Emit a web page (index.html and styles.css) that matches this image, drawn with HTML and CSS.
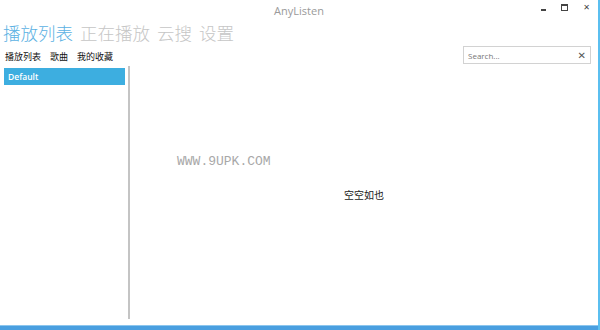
FILE: index.html
```html
<!DOCTYPE html>
<html lang="zh">
<head>
    <meta charset="UTF-8">
    <title>AnyListen</title>
    <link rel="stylesheet" href="styles.css">
</head>
<body>

<div class="window">
    <div class="titlebar">
        <span class="appTitle">AnyListen</span>
        <div class="controls">
            <span class="ctlMin"></span>
            <span class="ctlMax"></span>
            <span class="ctlClose">&#x2715;</span>
        </div>
    </div>

    <div class="tabs">
        <span class="tab active">播放列表</span>
        <span class="tab">正在播放</span>
        <span class="tab">云搜</span>
        <span class="tab">设置</span>
    </div>

    <div class="toolbar">
        <div class="subTabs">
            <span>播放列表</span>
            <span>歌曲</span>
            <span>我的收藏</span>
        </div>
        <div class="searchBox">
            <span class="searchText">Search...</span>
            <span class="searchClear">&#x2715;</span>
        </div>
    </div>

    <div class="main">
        <div class="sidebar">
            <div class="listItem selected">Default</div>
        </div>
        <div class="divider"></div>
        <div class="content">
            <p class="empty">空空如也</p>
            <span class="watermark">WWW.9UPK.COM</span>
        </div>
    </div>

    <div class="bottomBar"></div>
</div>

</body>
</html>
```
FILE: styles.css
```css
body {
    margin: 0;
    background-color: #ffffff;
    font-family: "Open Sans", "Noto Sans CJK SC", sans-serif;
}
.window {
    height: 330px;
    display: flex;
    flex-direction: column;
    border-right: 2px solid #5bbff0;
    box-sizing: border-box;
}
.titlebar {
    height: 20px;
    display: flex;
    align-items: center;
    justify-content: center;
    position: relative;
}
.appTitle {
    font-size: 11px;
    color: #9a9a9a;
}
.controls {
    position: absolute;
    right: 8px;
    top: 0;
    height: 14px;
    display: flex;
    align-items: center;
    gap: 15px;
}
.ctlMin {
    width: 5px;
    height: 2px;
    background: #444;
    margin-top: 6px;
}
.ctlMax {
    width: 5px;
    height: 4px;
    border: 1px solid #444;
    border-top-width: 2px;
}
.ctlClose {
    font-size: 8px;
    color: #444;
    font-family: "DejaVu Sans", sans-serif;
}
.tabs {
    height: 26px;
    display: flex;
    align-items: center;
    gap: 7px;
    padding-left: 3px;
}
.tab {
    font-family: "Noto Sans CJK SC", sans-serif;
    font-size: 17.5px;
    font-weight: 300;
    color: #c6c6c6;
    line-height: 24px;
}
.tab.active {
    color: #5bb1e3;
}
.toolbar {
    height: 20px;
    display: flex;
    align-items: center;
    justify-content: space-between;
    padding: 0 7px 0 5px;
}
.subTabs {
    display: flex;
    gap: 9px;
    font-family: "Noto Sans CJK SC", sans-serif;
    font-size: 9px;
    color: #111;
    margin-top: 1px;
}
.searchBox {
    width: 118px;
    height: 16px;
    border: 1px solid #d2d2d2;
    display: flex;
    align-items: center;
    justify-content: space-between;
    padding: 0 4px 0 4px;
    margin-top: -2px;
}
.searchText {
    font-size: 8px;
    color: #777;
}
.searchClear {
    font-size: 10px;
    color: #555;
    font-family: "DejaVu Sans", sans-serif;
}
.main {
    flex: 1;
    display: flex;
    padding-bottom: 6px;
}
.sidebar {
    width: 121px;
    padding: 2px 0 0 4px;
}
.listItem {
    height: 17px;
    line-height: 17px;
    padding-left: 4px;
    font-size: 8.5px;
    font-weight: 600;
}
.listItem.selected {
    background-color: #3daee0;
    color: #ffffff;
}
.divider {
    width: 2px;
    background-color: #c4c4c4;
    margin-left: 3px;
}
.content {
    flex: 1;
    display: flex;
    align-items: center;
    justify-content: center;
    position: relative;
}
.empty {
    margin: 0;
    font-family: "Noto Sans CJK SC", sans-serif;
    font-size: 10px;
    color: #222;
    margin-top: 3px;
}
.watermark {
    position: absolute;
    left: 47px;
    top: 88px;
    font-family: "Liberation Mono", monospace;
    font-size: 13px;
    color: #a8a8a8;
}
.bottomBar {
    height: 4px;
    background-color: #4a9fe0;
    border-top: 1px solid #8cc6ee;
}
```
